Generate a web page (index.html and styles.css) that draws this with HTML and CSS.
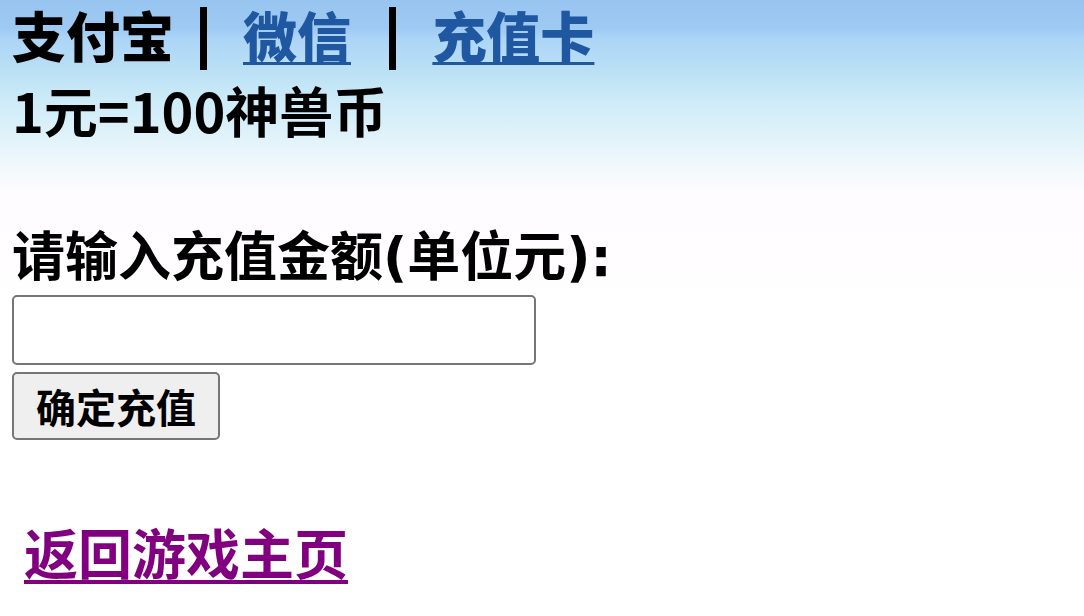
FILE: index.html
```html
<!DOCTYPE html>
<html lang="zh-CN">
<head>
<meta charset="utf-8">
<title>充值</title>
<link rel="stylesheet" href="styles.css">
</head>
<body>
<div class="page">
  <div class="tabs">支付宝<span class="sep" aria-hidden="true"></span><a class="tab" href="#">微信</a> <span class="sep" aria-hidden="true"></span><a class="tab" href="#">充值卡</a></div>
  <div class="rate">1元=100神兽币</div>
  <form class="pay" onsubmit="return false">
    <label class="label" for="amount">请输入充值金额(单位元):</label>
    <input class="amount" id="amount" type="text">
    <button class="submit" type="submit">确定充值</button>
  </form>
  <a class="back" href="#">返回游戏主页</a>
</div>
</body>
</html>
```

FILE: styles.css
```css
html {
  background: #ffffff;
}
body {
  margin: 0;
  min-height: 616px;
  background: linear-gradient(to bottom, #98c5f0 0px, #9dc9f2 28px, #acd4f7 38px, #bae0f5 70px, #cdebf8 100px, #e2f3fa 140px, #f3f9fd 170px, #fefcfe 195px, #fffdff 260px, #ffffff 300px) no-repeat;
  background-size: 100% 320px;
  font-family: "Noto Sans CJK SC", "Noto Sans", sans-serif;
  color: #000;
}
.page {
  display: flex;
  flex-direction: column;
  align-items: flex-start;
  padding: 0 12px;
}
.tabs {
  font-size: 54px;
  font-weight: 900;
  line-height: 70px;
  white-space: nowrap;
}
.sep {
  display: inline-block;
  width: 7px;
  height: 63px;
  margin: 7px 36px 0 26px;
  background: #000;
  vertical-align: top;
}
.tab {
  color: #1f57a1;
  text-decoration: underline;
  text-decoration-thickness: 3px;
  text-underline-offset: 4px;
}
.rate {
  font-size: 54px;
  font-weight: 700;
  line-height: 80px;
}
.pay {
  display: flex;
  flex-direction: column;
  align-items: flex-start;
  margin-top: 78px;
}
.label {
  font-family: "DejaVu Sans", "Noto Sans CJK SC", sans-serif;
  font-size: 53px;
  font-weight: 700;
  line-height: 60px;
}
.amount {
  box-sizing: border-box;
  width: 524px;
  height: 70px;
  margin: 7px 0 0 0;
  border: 2px solid #767676;
  border-radius: 5px;
  background: #ffffff;
  font-size: 40px;
  padding: 0 6px;
}
.submit {
  box-sizing: border-box;
  width: 208px;
  height: 68px;
  margin: 7px 0 0 0;
  padding: 0;
  border: 2px solid #767676;
  border-radius: 5px;
  background: #efefef;
  font-family: "DejaVu Sans", "Noto Sans CJK SC", sans-serif;
  font-size: 40px;
  font-weight: 700;
  color: #000;
}
.back {
  margin: 72px 0 0 12px;
  font-size: 54px;
  font-weight: 700;
  line-height: 80px;
  color: #800080;
  text-decoration: underline;
  text-decoration-thickness: 4px;
  text-underline-offset: 5px;
}
```
